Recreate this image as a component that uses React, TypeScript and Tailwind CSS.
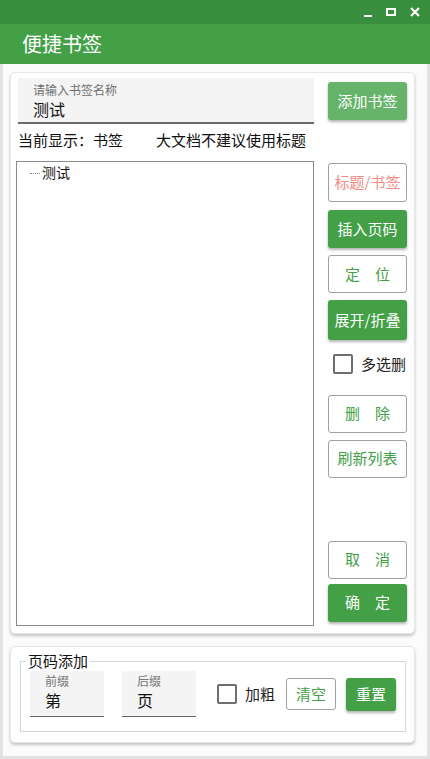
import React from 'react';

const FONT = { fontFamily: '"Microsoft YaHei", "Noto Sans CJK SC", "Noto Sans", sans-serif' };

function OutlineBtn({ label, className = '', tone = 'green' }: { label: string; className?: string; tone?: 'green' | 'red' }) {
  return (
    <button
      className={`flex items-center justify-center w-[79px] h-[38px] bg-white border border-[#a0a0a0] rounded-[3px] text-[15px] ${
        tone === 'red' ? 'text-[#f38b82]' : 'text-[#43a047]'
      } ${className}`}
    >
      {label}
    </button>
  );
}

function SolidBtn({ label, className = '' }: { label: string; className?: string }) {
  return (
    <button
      className={`flex items-center justify-center w-[79px] h-[38px] bg-[#43a047] rounded-[3px] text-white text-[15px] shadow-[0_2px_3px_rgba(0,0,0,0.3)] ${className}`}
    >
      {label}
    </button>
  );
}

function Checkbox({ label }: { label: string }) {
  return (
    <label className="flex items-center gap-[8px] text-[15px] text-[#222] whitespace-nowrap">
      <span className="shrink-0 w-[20px] h-[20px] border-2 border-[#6e6e6e] rounded-[2px] bg-white" />
      {label}
    </label>
  );
}

function SmallInput({ label, value }: { label: string; value: string }) {
  return (
    <div className="shrink-0 w-[74px] h-[46px] bg-[#f4f4f4] border-b border-[#666] pl-[15px] pt-[4px] leading-none">
      <div className="text-[12px] text-[#777]">{label}</div>
      <div className="text-[16px] text-[#111] mt-[5px]">{value}</div>
    </div>
  );
}

export default function App() {
  return (
    <div className="w-[430px] h-[759px] flex flex-col overflow-hidden" style={FONT}>
      {/* window bar */}
      <div className="h-[24px] bg-[#388e3c] flex items-center justify-end pr-[10px] gap-[14px]">
        <span className="w-[8px] h-[2px] bg-white mt-[8px]" />
        <span className="w-[10px] h-[8px] border-2 border-white" />
        <svg width="10" height="10" viewBox="0 0 10 10">
          <path d="M1 1 L9 9 M9 1 L1 9" stroke="white" strokeWidth="2.2" />
        </svg>
      </div>
      {/* header */}
      <div className="h-[40px] bg-[#43a047] flex items-center pl-[22px] text-white text-[20px]">便捷书签</div>

      {/* body */}
      <div className="flex-1 bg-[#fbfbfb] border-x-[3px] border-b-[3px] border-[#e2e2e2] pl-[7px] pt-[8px]">
        {/* main card */}
        <div className="w-[405px] h-[562px] bg-white rounded-[5px] border border-[#e6e6e6] shadow-[0_2px_3px_rgba(0,0,0,0.22)] flex pl-[5px] pt-[5px]">
          <div className="w-[298px] flex flex-col">
            <div className="ml-[2px] h-[46px] bg-[#f4f4f4] border-b-2 border-[#6a6a6a] pl-[15px] pt-[6px] leading-none">
              <div className="text-[12px] text-[#6f6f6f]">请输入书签名称</div>
              <div className="text-[16px] text-[#111] mt-[5px]">测试</div>
            </div>
            <div className="flex mt-[7px] text-[15px] text-[#111] leading-[18px] ml-[2px]">
              <span>当前显示：书签</span>
              <span className="ml-[33px]">大文档不建议使用标题</span>
            </div>
            <div className="mt-[12px] h-[465px] border border-[#8a8a94] pl-[13px]">
              <div className="flex items-center text-[14px] text-[#111] leading-[20px]">
                <span className="w-[10px] border-b border-dotted border-[#888] mr-[2px] mt-[2px]" />
                测试
              </div>
            </div>
          </div>

          <div className="ml-[14px] flex flex-col">
            <button className="mt-[4px] flex items-center justify-center w-[79px] h-[38px] bg-[#66b36a] rounded-[3px] text-white text-[15px] shadow-[0_2px_3px_rgba(0,0,0,0.3)]">
              添加书签
            </button>
            <OutlineBtn label="标题/书签" tone="red" className="mt-[43px] h-[39px]" />
            <SolidBtn label="插入页码" className="mt-[8px]" />
            <OutlineBtn label="定　位" className="mt-[7px]" />
            <SolidBtn label="展开/折叠" className="mt-[7px] h-[40px]" />
            <div className="mt-[13px] ml-[5px]">
              <Checkbox label="多选删" />
            </div>
            <OutlineBtn label="删　除" className="mt-[19px]" />
            <OutlineBtn label="刷新列表" className="mt-[7px]" />
            <OutlineBtn label="取　消" className="mt-[63px]" />
            <SolidBtn label="确　定" className="mt-[5px]" />
          </div>
        </div>

        {/* page number card */}
        <div className="mt-[12px] w-[405px] h-[97px] bg-white rounded-[5px] border border-[#e6e6e6] shadow-[0_2px_3px_rgba(0,0,0,0.22)] px-[9px] pt-[5px]">
          <fieldset className="border border-[#d6d6d6] h-[80px] px-[9px]">
            <legend className="text-[15px] text-[#111] px-[2px] ml-[-4px] leading-[18px]">页码添加</legend>
            <div className="flex items-center mt-[1px]">
              <SmallInput label="前缀" value="第" />
              <div className="ml-[18px]">
                <SmallInput label="后缀" value="页" />
              </div>
              <div className="ml-[21px] shrink-0">
                <Checkbox label="加粗" />
              </div>
              <button className="shrink-0 ml-[11px] w-[50px] h-[32px] border border-[#a0a0a0] rounded-[3px] bg-white text-[#43a047] text-[15px]">
                清空
              </button>
              <button className="shrink-0 ml-[10px] w-[50px] h-[33px] bg-[#43a047] rounded-[3px] text-white text-[15px] shadow-[0_2px_3px_rgba(0,0,0,0.3)]">
                重置
              </button>
            </div>
          </fieldset>
        </div>
      </div>
    </div>
  );
}
